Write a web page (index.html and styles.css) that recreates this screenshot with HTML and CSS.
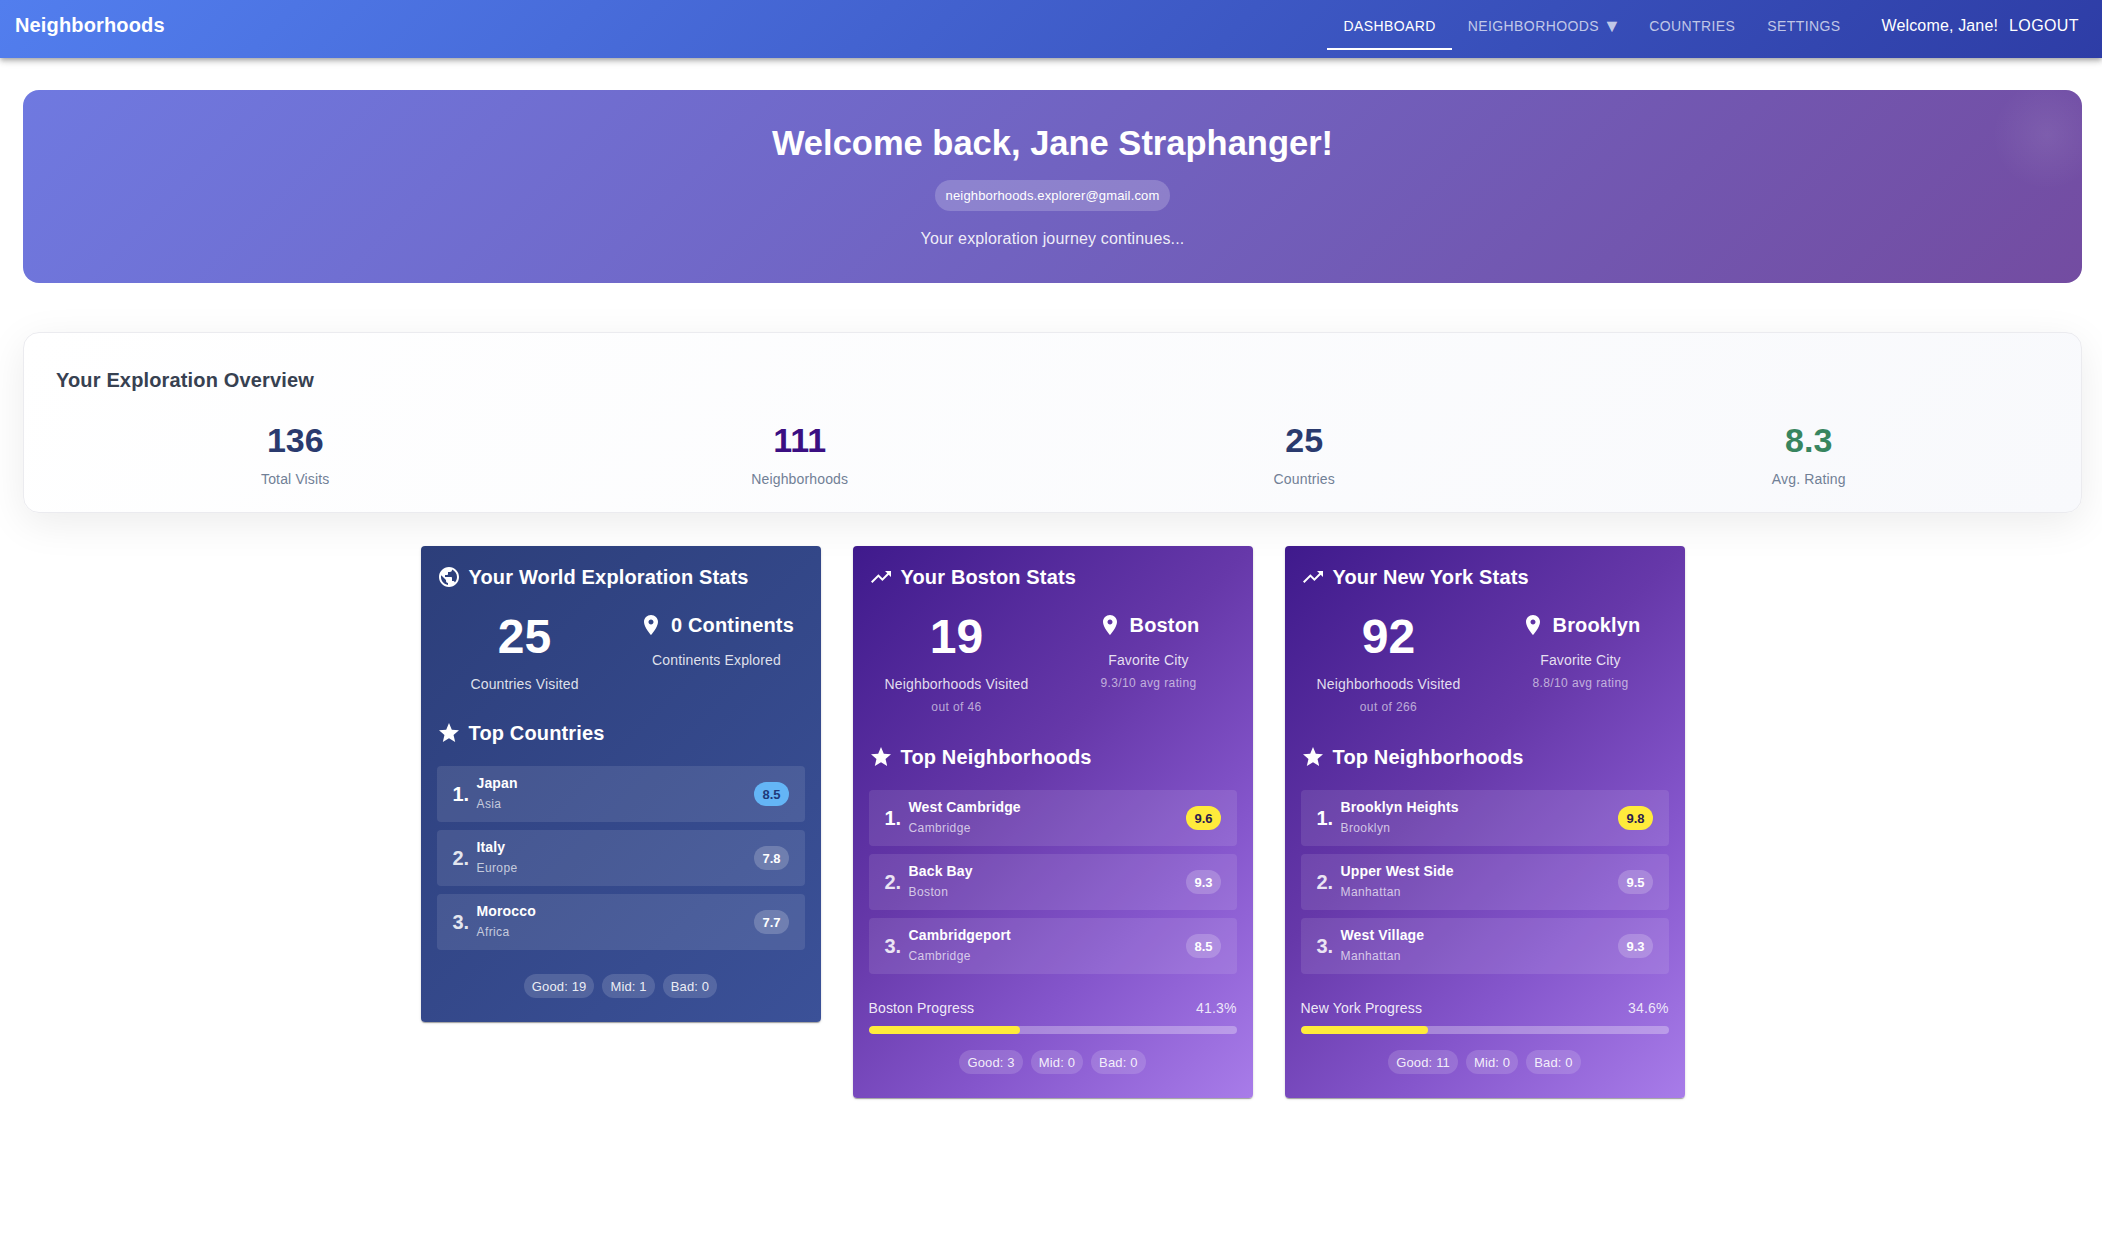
FILE: index.html
```html
<!DOCTYPE html>
<html lang="en">
<head>
<meta charset="utf-8">
<title>Neighborhoods</title>
<link rel="stylesheet" href="styles.css">
</head>
<body>
<svg class="defs" width="0" height="0" aria-hidden="true">
  <symbol id="i-public" viewBox="0 0 24 24"><path d="M12 2C6.48 2 2 6.48 2 12s4.48 10 10 10 10-4.48 10-10S17.52 2 12 2zm-1 17.93c-3.95-.49-7-3.85-7-7.93 0-.62.08-1.21.21-1.79L9 15v1c0 1.1.9 2 2 2v1.93zm6.9-2.54c-.26-.81-1-1.39-1.9-1.39h-1v-3c0-.55-.45-1-1-1H8v-2h2c.55 0 1-.45 1-1V7h2c1.1 0 2-.9 2-2v-.41c2.93 1.19 5 4.06 5 7.41 0 2.08-.8 3.97-2.1 5.39z"/></symbol>
  <symbol id="i-trend" viewBox="0 0 24 24"><path d="M16 6l2.29 2.29-4.88 4.88-4-4L2 16.59 3.41 18l6-6 4 4 6.3-6.29L22 12V6z"/></symbol>
  <symbol id="i-star" viewBox="0 0 24 24"><path d="M12 17.27L18.18 21l-1.64-7.03L22 9.24l-7.19-.61L12 2 9.19 8.63 2 9.24l5.46 4.73L5.82 21z"/></symbol>
  <symbol id="i-place" viewBox="0 0 24 24"><path d="M12 2C8.13 2 5 5.13 5 9c0 5.25 7 13 7 13s7-7.75 7-13c0-3.87-3.13-7-7-7zm0 9.5c-1.38 0-2.5-1.12-2.5-2.5s1.12-2.5 2.5-2.5 2.5 1.12 2.5 2.5-1.12 2.5-2.5 2.5z"/></symbol>
</svg>

<header class="appbar">
  <div class="brand">Neighborhoods</div>
  <nav class="nav">
    <a class="nav-link active">Dashboard</a>
    <a class="nav-link">Neighborhoods<span class="caret">▼</span></a>
    <a class="nav-link">Countries</a>
    <a class="nav-link">Settings</a>
  </nav>
  <div class="user">
    <span class="welcome">Welcome, Jane!</span>
    <a class="logout">Logout</a>
  </div>
</header>

<main class="page">
  <section class="hero">
    <h1 class="hero-title">Welcome back, Jane Straphanger!</h1>
    <div class="hero-email">neighborhoods.explorer@gmail.com</div>
    <p class="hero-sub">Your exploration journey continues...</p>
  </section>

  <section class="overview">
    <h2 class="overview-title">Your Exploration Overview</h2>
    <div class="overview-grid">
      <div class="metric"><div class="metric-value navy">136</div><div class="metric-label">Total Visits</div></div>
      <div class="metric"><div class="metric-value violet">111</div><div class="metric-label">Neighborhoods</div></div>
      <div class="metric"><div class="metric-value navy">25</div><div class="metric-label">Countries</div></div>
      <div class="metric"><div class="metric-value green">8.3</div><div class="metric-label">Avg. Rating</div></div>
    </div>
  </section>

  <section class="cards">
    <article class="card card-world">
      <h3 class="card-title"><svg class="icon"><use href="#i-public"/></svg>Your World Exploration Stats</h3>
      <div class="stats">
        <div class="stat">
          <div class="stat-big">25</div>
          <div class="stat-label">Countries Visited</div>
        </div>
        <div class="stat">
          <div class="stat-head"><svg class="icon"><use href="#i-place"/></svg>0 Continents</div>
          <div class="stat-label">Continents Explored</div>
        </div>
      </div>
      <h3 class="card-title top-title"><svg class="icon"><use href="#i-star"/></svg>Top Countries</h3>
      <div class="rows">
        <div class="row"><span class="rank">1.</span><div class="row-text"><div class="row-name">Japan</div><div class="row-sub">Asia</div></div><span class="chip rate rate-blue">8.5</span></div>
        <div class="row"><span class="rank dim">2.</span><div class="row-text"><div class="row-name">Italy</div><div class="row-sub">Europe</div></div><span class="chip rate">7.8</span></div>
        <div class="row"><span class="rank dim">3.</span><div class="row-text"><div class="row-name">Morocco</div><div class="row-sub">Africa</div></div><span class="chip rate">7.7</span></div>
      </div>
      <div class="chips chips-world">
        <span class="chip">Good: 19</span><span class="chip">Mid: 1</span><span class="chip">Bad: 0</span>
      </div>
    </article>

    <article class="card card-city">
      <h3 class="card-title"><svg class="icon"><use href="#i-trend"/></svg>Your Boston Stats</h3>
      <div class="stats">
        <div class="stat">
          <div class="stat-big">19</div>
          <div class="stat-label">Neighborhoods Visited</div>
          <div class="stat-sub">out of 46</div>
        </div>
        <div class="stat">
          <div class="stat-head"><svg class="icon"><use href="#i-place"/></svg>Boston</div>
          <div class="stat-label">Favorite City</div>
          <div class="stat-sub">9.3/10 avg rating</div>
        </div>
      </div>
      <h3 class="card-title top-title"><svg class="icon"><use href="#i-star"/></svg>Top Neighborhoods</h3>
      <div class="rows">
        <div class="row"><span class="rank">1.</span><div class="row-text"><div class="row-name">West Cambridge</div><div class="row-sub">Cambridge</div></div><span class="chip rate rate-yellow">9.6</span></div>
        <div class="row"><span class="rank dim">2.</span><div class="row-text"><div class="row-name">Back Bay</div><div class="row-sub">Boston</div></div><span class="chip rate">9.3</span></div>
        <div class="row"><span class="rank dim">3.</span><div class="row-text"><div class="row-name">Cambridgeport</div><div class="row-sub">Cambridge</div></div><span class="chip rate">8.5</span></div>
      </div>
      <div class="progress-head"><span>Boston Progress</span><span class="progress-pct">41.3%</span></div>
      <div class="bar"><div class="bar-fill" style="width:41.3%"></div></div>
      <div class="chips">
        <span class="chip">Good: 3</span><span class="chip">Mid: 0</span><span class="chip">Bad: 0</span>
      </div>
    </article>

    <article class="card card-city">
      <h3 class="card-title"><svg class="icon"><use href="#i-trend"/></svg>Your New York Stats</h3>
      <div class="stats">
        <div class="stat">
          <div class="stat-big">92</div>
          <div class="stat-label">Neighborhoods Visited</div>
          <div class="stat-sub">out of 266</div>
        </div>
        <div class="stat">
          <div class="stat-head"><svg class="icon"><use href="#i-place"/></svg>Brooklyn</div>
          <div class="stat-label">Favorite City</div>
          <div class="stat-sub">8.8/10 avg rating</div>
        </div>
      </div>
      <h3 class="card-title top-title"><svg class="icon"><use href="#i-star"/></svg>Top Neighborhoods</h3>
      <div class="rows">
        <div class="row"><span class="rank">1.</span><div class="row-text"><div class="row-name">Brooklyn Heights</div><div class="row-sub">Brooklyn</div></div><span class="chip rate rate-yellow">9.8</span></div>
        <div class="row"><span class="rank dim">2.</span><div class="row-text"><div class="row-name">Upper West Side</div><div class="row-sub">Manhattan</div></div><span class="chip rate">9.5</span></div>
        <div class="row"><span class="rank dim">3.</span><div class="row-text"><div class="row-name">West Village</div><div class="row-sub">Manhattan</div></div><span class="chip rate">9.3</span></div>
      </div>
      <div class="progress-head"><span>New York Progress</span><span class="progress-pct">34.6%</span></div>
      <div class="bar"><div class="bar-fill" style="width:34.6%"></div></div>
      <div class="chips">
        <span class="chip">Good: 11</span><span class="chip">Mid: 0</span><span class="chip">Bad: 0</span>
      </div>
    </article>
  </section>
</main>
</body>
</html>
```
FILE: styles.css
```css
* { box-sizing: border-box; }
html, body { margin: 0; padding: 0; }
body {
  background: #fff;
  color: #fff;
  font-family: "Liberation Sans", Arial, sans-serif;
  min-height: 1258px;
}
.defs { position: absolute; }
.icon { width: 24px; height: 24px; fill: currentColor; flex: none; }

/* App bar */
.appbar {
  height: 58px;
  display: flex;
  align-items: center;
  padding: 0 24px 8px 15px;
  background: linear-gradient(135deg, #527eee 0%, #2e3da6 100%);
  box-shadow: 0 2px 4px -1px rgba(0,0,0,.2), 0 4px 5px rgba(0,0,0,.14), 0 1px 10px rgba(0,0,0,.12);
}
.brand { font-size: 20px; font-weight: 700; letter-spacing: .15px; margin-right: auto; }
.nav { display: flex; align-self: stretch; align-items: stretch; }
.nav-link {
  display: flex;
  align-items: center;
  gap: 4px;
  padding: 4px 16px 0;
  font-size: 14px;
  letter-spacing: .4px;
  text-transform: uppercase;
  color: rgba(255,255,255,.7);
  border-bottom: 2px solid transparent;
}
.nav-link.active { color: #fff; border-bottom-color: #fff; }
.caret { font-size: 18px; line-height: 14px; margin-right: -4px; }
.user { display: flex; align-items: center; gap: 11px; margin-left: 25px; padding-top: 1px; font-size: 16px; margin-right: -1px; }
.welcome { letter-spacing: .15px; }
.logout { text-transform: uppercase; letter-spacing: .4px; }

/* Page */
.page { padding: 32px 20px 0 23px; }

/* Hero */
.hero {
  position: relative;
  overflow: hidden;
  height: 193px;
  padding-top: 32px;
  text-align: center;
  border-radius: 16px;
  background: linear-gradient(135deg, #6f79e0 0%, #734ca1 100%);
}
.hero::before {
  content: "";
  position: absolute;
  top: -10px;
  right: -20px;
  width: 110px;
  height: 110px;
  border-radius: 50%;
  background: radial-gradient(circle, rgba(255,255,255,.08) 0%, rgba(255,255,255,0) 70%);
}
.hero-title { margin: 0; font-size: 34.5px; line-height: 42px; font-weight: 700; }
.hero-email {
  display: inline-block;
  margin-top: 16px;
  padding: 0 11px;
  height: 31px;
  line-height: 31px;
  font-size: 13px;
  letter-spacing: .15px;
  border-radius: 16px;
  background: rgba(255,255,255,.2);
}
.hero-sub { margin: 16px 0 0; font-size: 16px; line-height: 24px; letter-spacing: .15px; color: rgba(255,255,255,.9); }

/* Overview */
.overview {
  margin-top: 49px;
  height: 181px;
  padding: 31px 32px 0;
  border: 1px solid #ebebef;
  border-radius: 16px;
  background: linear-gradient(135deg, #fff 0%, #f8f9fc 100%);
  box-shadow: 0 10px 40px rgba(0,0,0,.08);
}
.overview-title { margin: 0; font-size: 20px; line-height: 32px; font-weight: 700; color: #374151; letter-spacing: .15px; }
.overview-grid { display: grid; grid-template-columns: repeat(4, 1fr); margin: 24px -12px 0 -13px; }
.metric { text-align: center; }
.metric-value { font-size: 34px; line-height: 40px; font-weight: 700; }
.metric-label { margin-top: 9px; font-size: 14px; line-height: 20px; letter-spacing: .15px; color: #718096; }
.navy { color: #2a3a6e; }
.violet { color: #3b0f82; }
.green { color: #38855f; }

/* Cards */
.cards { display: flex; justify-content: center; align-items: flex-start; gap: 32px; margin-top: 33px; }
.card {
  width: 400px;
  padding: 16px 16px 24px;
  border-radius: 4px;
  box-shadow: 0 2px 1px -1px rgba(0,0,0,.2), 0 1px 1px rgba(0,0,0,.14), 0 1px 3px rgba(0,0,0,.12);
}
.card-world { background: linear-gradient(135deg, #2c3e7a 0%, #3b5198 100%); }
.card-city { background: linear-gradient(135deg, #3f1a8c 0%, #6638a9 42%, #8556cc 70%, #a87ce9 100%); }
.card-title {
  display: flex;
  align-items: center;
  gap: 8px;
  margin: 0;
  font-size: 20px;
  line-height: 30px;
  font-weight: 700;
  letter-spacing: .15px;
}
.top-title { margin-top: 24px; }
.stats { display: grid; grid-template-columns: 1fr 1fr; gap: 16px; margin-top: 17px; }
.stat { text-align: center; }
.stat-big { font-size: 48px; line-height: 56px; font-weight: 700; }
.stat-head {
  display: flex;
  align-items: center;
  justify-content: center;
  gap: 8px;
  font-size: 20px;
  line-height: 32px;
  font-weight: 700;
  letter-spacing: .15px;
}
.stat-label { margin-top: 9px; font-size: 14px; line-height: 20px; letter-spacing: .15px; color: rgba(255,255,255,.85); }
.stat-sub { margin: 4px 0 2px; font-size: 12px; line-height: 18px; letter-spacing: .4px; color: rgba(255,255,255,.6); }

/* Rows */
.rows { display: flex; flex-direction: column; gap: 8px; margin-top: 18px; }
.row {
  display: flex;
  align-items: center;
  height: 56px;
  padding: 0 16px;
  border-radius: 4px;
  background: rgba(255,255,255,.1);
}
.rank { min-width: 24px; font-size: 20px; font-weight: 700; }
.rank.dim { opacity: .85; }
.row-text { flex: 1; }
.row-name { font-size: 14px; line-height: 20px; font-weight: 700; letter-spacing: .15px; }
.row-sub { font-size: 12px; line-height: 22px; letter-spacing: .4px; color: rgba(255,255,255,.7); }

/* Chips */
.chip {
  display: inline-flex;
  align-items: center;
  height: 24px;
  padding: 0 8px;
  border-radius: 12px;
  font-size: 13px;
  letter-spacing: .15px;
  color: rgba(255,255,255,.9);
  background: rgba(255,255,255,.15);
}
.rate { font-weight: 700; letter-spacing: 0; color: #fff; background: rgba(255,255,255,.2); }
.rate-blue { background: #64b5f6; color: #1f3a7a; }
.rate-yellow { background: #ffeb3b; color: #2b1b4e; }
.chips { display: flex; justify-content: center; gap: 8px; margin-top: 16px; }
.chips-world { margin-top: 24px; }

/* Progress */
.progress-head {
  display: flex;
  justify-content: space-between;
  margin-top: 24px;
  font-size: 14px;
  line-height: 20px;
  letter-spacing: .15px;
  color: rgba(255,255,255,.9);
}
.progress-pct { color: rgba(255,255,255,.85); }
.bar { height: 8px; margin-top: 8px; border-radius: 4px; background: rgba(255,255,255,.3); overflow: hidden; }
.bar-fill { height: 100%; border-radius: 4px; background: #ffeb3b; }
```
